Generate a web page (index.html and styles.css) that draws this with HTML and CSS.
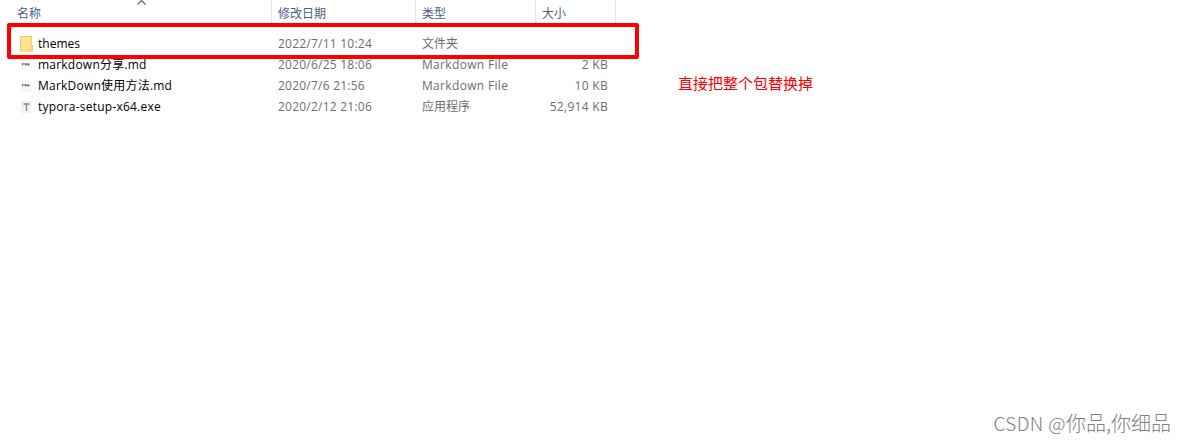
FILE: index.html
```html
<!DOCTYPE html>
<html lang="zh-CN">
<head>
<meta charset="utf-8">
<title>文件列表</title>
<link rel="stylesheet" href="styles.css">
</head>
<body>
<main class="page">
  <section class="explorer">
    <div class="row header">
      <span class="cell name">名称</span>
      <span class="cell">修改日期</span>
      <span class="cell">类型</span>
      <span class="cell">大小</span>
      <svg class="sort" width="9" height="5" viewBox="0 0 9 5"><path d="M.5 4.500 4.500.500l4 4" fill="none" stroke="#666" stroke-width="1.200"/></svg>
    </div>
    <div class="files">
      <div class="row">
        <span class="cell name"><svg class="icon" width="16" height="16" viewBox="0 0 16 16"><path d="M2.500.500h11v9.500h1v5h-12z" fill="#ffe391" stroke="#edcb5b"/><path d="M12.500 15v-4.500l2-1V15z" fill="#ffe391" stroke="#edcb5b"/></svg><span>themes</span></span>
        <span class="cell date">2022/7/11 10:24</span>
        <span class="cell">文件夹</span>
        <span class="cell size"></span>
      </div>
      <div class="row">
        <span class="cell name"><svg class="icon" width="16" height="16" viewBox="0 0 16 16"><path d="M3 2h9l2 2v10H3z" fill="#f7f7f7"/><path d="M4.500 8.500V6l1.500 1.500L7.500 6v2.500M9 6v2.500M8.500 7.500h3M10.500 6v2.500" fill="none" stroke="#777"/></svg><span class="latin-cjk">markdown分享.md</span></span>
        <span class="cell date">2020/6/25 18:06</span>
        <span class="cell kind">Markdown File</span>
        <span class="cell size">2 KB</span>
      </div>
      <div class="row">
        <span class="cell name"><svg class="icon" width="16" height="16" viewBox="0 0 16 16"><path d="M3 2h9l2 2v10H3z" fill="#f7f7f7"/><path d="M4.500 8.500V6l1.500 1.500L7.500 6v2.500M9 6v2.500M8.500 7.500h3M10.500 6v2.500" fill="none" stroke="#777"/></svg><span class="latin-cjk">MarkDown使用方法.md</span></span>
        <span class="cell date">2020/7/6 21:56</span>
        <span class="cell kind">Markdown File</span>
        <span class="cell size">10 KB</span>
      </div>
      <div class="row">
        <span class="cell name"><svg class="icon" width="16" height="16" viewBox="0 0 16 16"><path d="M3 2h11l-1 12H3z" fill="#f2f2f2"/><path d="M5.500 5h6M8.500 5v7" fill="none" stroke="#888" stroke-width="1.300"/></svg><span class="latin-cjk">typora-setup-x64.exe</span></span>
        <span class="cell date">2020/2/12 21:06</span>
        <span class="cell">应用程序</span>
        <span class="cell size">52,914 KB</span>
      </div>
    </div>
    <div class="highlight"></div>
  </section>
  <p class="note">直接把整个包替换掉</p>
  <div class="watermark"><span class="brand">CSDN @</span>你品,你细品</div>
</main>
</body>
</html>
```
FILE: styles.css
```css
body {
  margin: 0;
  background: #fff;
}

.page {
  position: relative;
  display: flex;
  height: 442px;
  overflow: hidden;
  font: 12px/21px "Open Sans", "Noto Sans CJK SC", sans-serif;
}

.explorer {
  position: relative;
  width: 640px;
}

.row {
  display: grid;
  grid-template-columns: 272px 144px 120px 80px;
  height: 21px;
  color: #6d6d6d;
  white-space: nowrap;
}

.cell {
  box-sizing: border-box;
  padding-left: 6px;
}

.header {
  height: 26px;
  color: #4c607a;
  line-height: 27px;
}

.header .cell {
  border-right: 1px solid #e5e5e5;
}

.header .name {
  padding-left: 17px;
}

.sort {
  position: absolute;
  top: 0;
  left: 137px;
}

.files {
  padding-top: 7px;
}

.files .name {
  display: flex;
  align-items: center;
  gap: 4px;
  padding-left: 18px;
  color: #000;
}

.icon {
  flex: none;
}

.latin-cjk {
  letter-spacing: 0.22px;
}

.date {
  letter-spacing: 0.23px;
}

.kind {
  letter-spacing: 0.33px;
}

.size {
  padding-right: 8px;
  text-align: right;
  letter-spacing: 0.3px;
}

.highlight {
  position: absolute;
  top: 23px;
  left: 7px;
  box-sizing: border-box;
  width: 632px;
  height: 36px;
  border: 4px solid #f00;
  border-radius: 2px;
}

.note {
  margin: 73px 0 0 38px;
  color: #f00;
  font-size: 15px;
}

.watermark {
  position: absolute;
  right: 14px;
  bottom: 6px;
  color: #808080;
  font: 300 20px/26px "Noto Sans CJK SC", sans-serif;
  white-space: nowrap;
}

.brand {
  font-size: 19px;
  letter-spacing: 0.4px;
}
```
